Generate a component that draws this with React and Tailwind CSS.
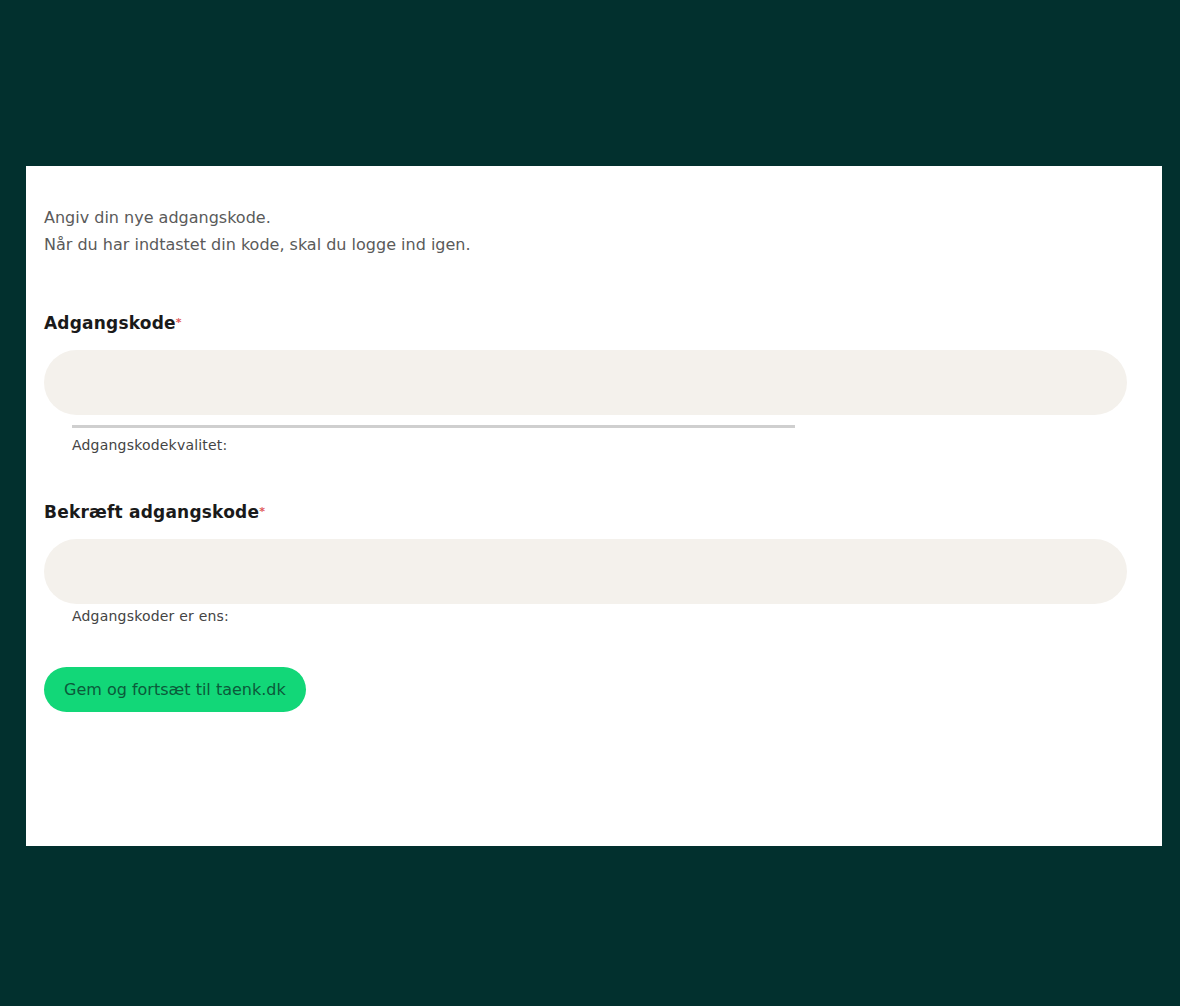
import React from 'react';

// Password reset form on a dark green page

function Field({ label, hint, meter }) {
  return (
    <div>
      <label className="block text-[17px] font-bold leading-6 tracking-[0.2px] text-[#1a1a1a]">
        {label}
        <span className="align-top text-[11px] text-[#e05a5a]">*</span>
      </label>
      <div className="mt-[15px] h-[65px] w-full rounded-full bg-[#f4f1ec]" />
      {meter && <div className="ml-[28px] mt-[10px] h-[3px] w-[723px] bg-[#cfcfcf]" />}
      <p className={`ml-[28px] text-[14px] tracking-[0.2px] text-[#444] ${meter ? 'mt-[7px]' : 'mt-[2px]'}`}>{hint}</p>
    </div>
  );
}

export default function App() {
  return (
    <div
      className="flex min-h-[1006px] w-full flex-col bg-[#02302e] pt-[166px]"
      style={{ fontFamily: '"DejaVu Sans", "Liberation Sans", sans-serif' }}
    >
      <div className="ml-[26px] mr-[18px] h-[680px] bg-white pl-[18px] pr-[35px] pt-[38px]">
        <div className="text-[16px] leading-[27px] text-[#5a5a5a]">
          <p>Angiv din nye adgangskode.</p>
          <p>Når du har indtastet din kode, skal du logge ind igen.</p>
        </div>

        <div className="mt-[53px]">
          <Field label="Adgangskode" hint="Adgangskodekvalitet:" meter />
        </div>

        <div className="mt-[44px]">
          <Field label="Bekræft adgangskode" hint="Adgangskoder er ens:" />
        </div>

        <button className="mt-[40px] h-[45px] rounded-full bg-[#12d778] px-[20px] text-[16px] text-[#0b5a3a]">
          Gem og fortsæt til taenk.dk
        </button>
      </div>
    </div>
  );
}
